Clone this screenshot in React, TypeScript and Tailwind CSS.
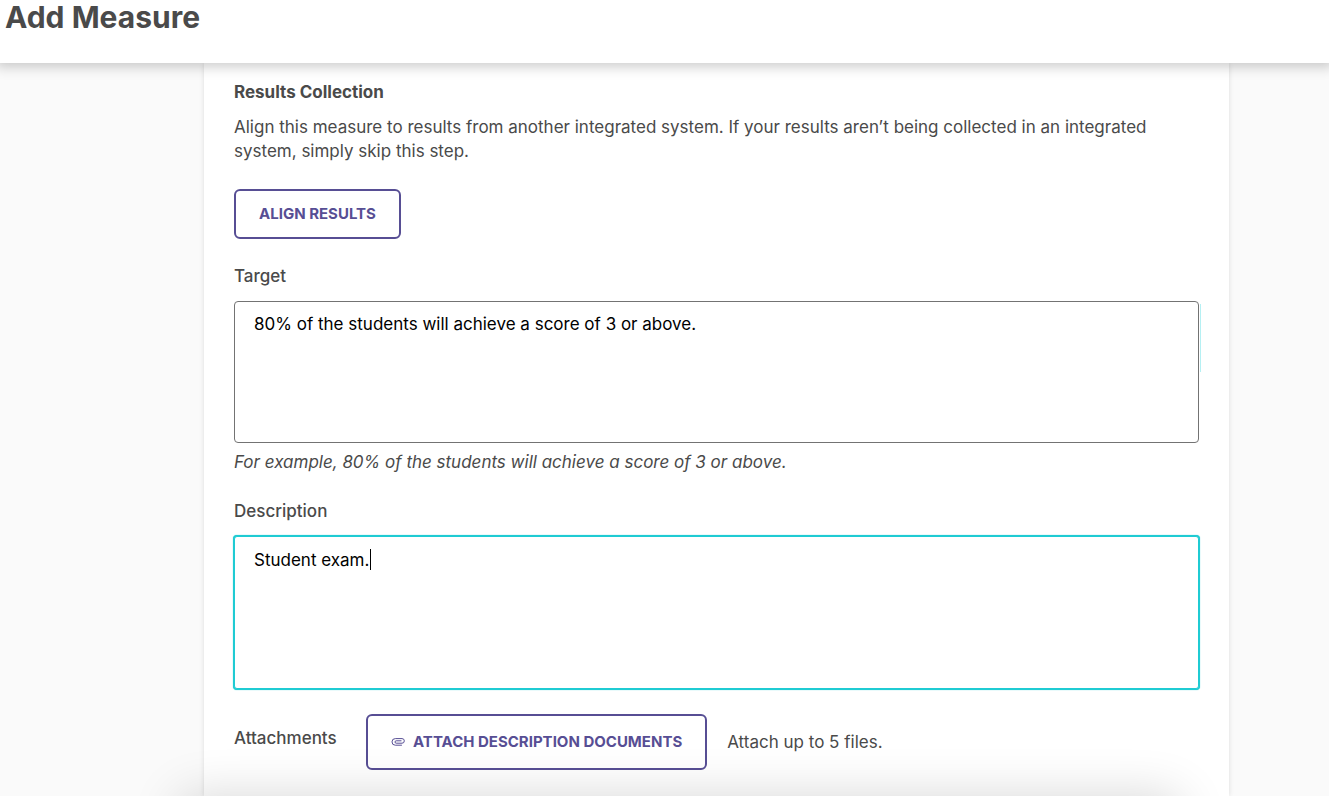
import React, { useState } from "react";

const buttonClass =
  "rounded-md border-2 border-[#574e94] bg-white px-[23px] font-bold uppercase text-[#574e94] text-[15px] leading-6";

function PaperclipIcon() {
  return (
    <svg
      viewBox="0 0 14 10"
      className="h-[10px] w-[14px] shrink-0"
      fill="none"
      stroke="currentColor"
      strokeWidth="1"
      strokeLinecap="round"
      aria-hidden="true"
    >
      <path d="M10.5 8.2H4.3a3.3 3.3 0 0 1 0-6.6H11a2.2 2.2 0 0 1 0 4.6H5.2a1.2 1.2 0 0 1 0-2.4h4.9" />
    </svg>
  );
}

export default function App() {
  const [target, setTarget] = useState("80% of the students will achieve a score of 3 or above.");
  const [description, setDescription] = useState("Student exam.");

  return (
    <div className="relative flex min-h-screen flex-col overflow-hidden bg-[#fafafa] font-['Inter',sans-serif] text-[17px] leading-6 text-[#4a4a4a]">
      <header className="relative z-10 h-[63px] bg-white pl-[5px] shadow-[0_0_12px_4px_rgba(0,0,0,0.2)]">
        <h1 className="text-[30px] leading-[34px] font-bold">Add Measure</h1>
      </header>

      <main className="mr-[100px] ml-[204px] flex-1 bg-white px-[30px] pt-[17px] pb-[26px] shadow-[0_0_5px_rgba(0,0,0,0.12)]">
        <section>
          <h2 className="font-bold">Results Collection</h2>
          <p className="mt-[11px]">
            Align this measure to results from another integrated system. If your results aren’t being collected in an
            integrated system, simply skip this step.
          </p>
          <button type="button" className={`${buttonClass} mt-[26px] h-[50px]`}>
            Align results
          </button>
        </section>

        <section className="mt-[25px]">
          <label htmlFor="target" className="block font-medium">
            Target
          </label>
          <div className="relative mt-[13px]">
            <textarea
              id="target"
              value={target}
              onChange={(e) => setTarget(e.target.value)}
              className="block h-[142px] w-full resize-none rounded-[4px] border border-[#737373] bg-white px-[19px] py-[10px] text-black outline-none"
            />
            <span className="absolute top-[3px] -right-[2px] h-[68px] w-px bg-[#b5f0f3]" />
          </div>
          <p className="mt-[7px] italic">For example, 80% of the students will achieve a score of 3 or above.</p>
        </section>

        <section className="mt-[25px]">
          <label htmlFor="description" className="block font-medium">
            Description
          </label>
          <div className="relative mt-[13px]">
            <textarea
              id="description"
              value={description}
              onChange={(e) => setDescription(e.target.value)}
              className="block h-[153px] w-full resize-none rounded-[3px] border border-[#1fcbd3] bg-white px-[19px] py-[11px] text-black caret-transparent shadow-[0_0_0_1px_#1fcbd3,0_0_1px_1px_#1fcbd3] outline-none"
            />
            <span className="absolute top-[13px] left-[136px] h-[21px] w-px bg-black" />
          </div>
        </section>

        <section className="mt-[25px] flex items-center">
          <label htmlFor="attach" className="w-[132px] pb-2 font-medium">
            Attachments
          </label>
          <button id="attach" type="button" className={`${buttonClass} flex h-14 items-center gap-2`}>
            <PaperclipIcon />
            Attach description documents
          </button>
          <span className="ml-5">Attach up to 5 files.</span>
        </section>
      </main>

      <div className="pointer-events-none absolute top-full right-[150px] left-[180px] h-20 rounded-lg shadow-[0_0_50px_rgba(0,0,0,0.16)]" />
    </div>
  );
}
